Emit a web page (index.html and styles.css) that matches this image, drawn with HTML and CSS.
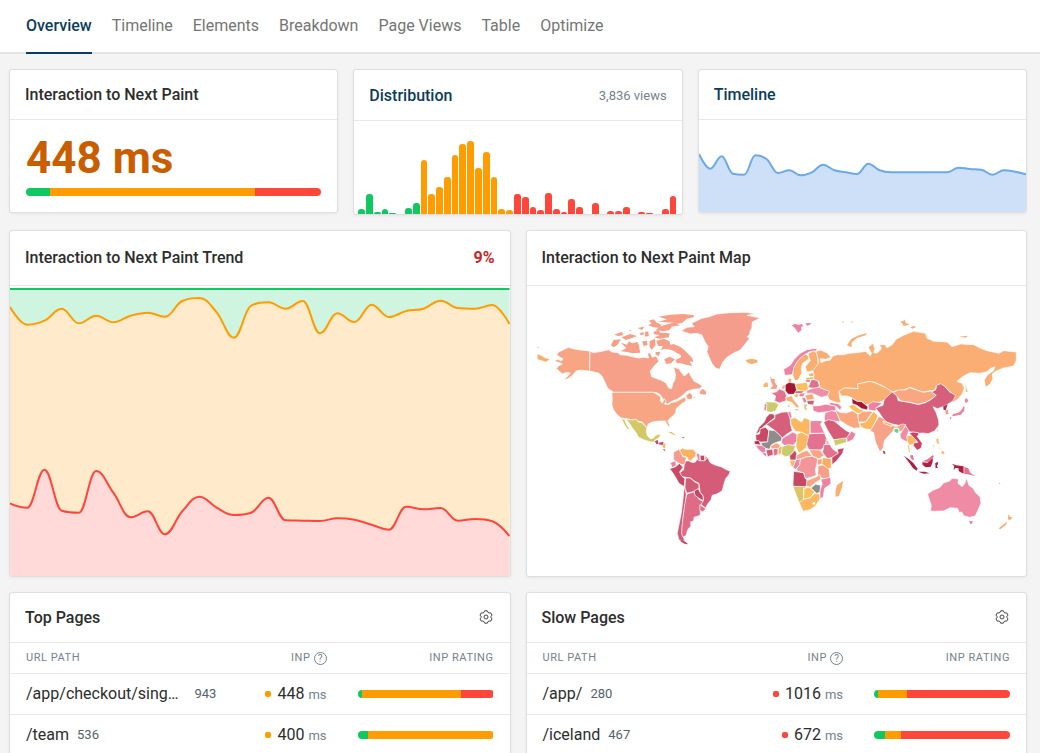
FILE: index.html
```html
<!DOCTYPE html>
<html lang="en">
<head>
    <meta charset="UTF-8">
    <meta name="viewport" content="width=device-width, initial-scale=1.0">
    <title>Interaction to Next Paint</title>
    <link rel="stylesheet" href="styles.css">
</head>

<body>

    <nav class="tabs">
        <a class="tab active" href="#overview">Overview</a>
        <a class="tab" href="#timeline">Timeline</a>
        <a class="tab" href="#elements">Elements</a>
        <a class="tab" href="#breakdown">Breakdown</a>
        <a class="tab" href="#views">Page Views</a>
        <a class="tab" href="#table">Table</a>
        <a class="tab" href="#optimize">Optimize</a>
    </nav>

    <main>
        <div class="row thirds">
            <section class="card">
                <div class="card-header"><h2>Interaction to Next Paint</h2></div>
                <div class="metric">
                    <div class="metric-value">448 ms</div>
                    <div class="rating">
                        <span class="good" style="width: 8%"></span>
                        <span class="medium" style="width: 69.5%"></span>
                        <span class="poor" style="width: 22.5%"></span>
                    </div>
                </div>
            </section>

            <section class="card">
                <div class="card-header tall">
                    <h2><a href="#distribution">Distribution</a></h2>
                    <span class="views">3,836 views</span>
                </div>
                <div class="histogram" id="histogram"></div>
            </section>

            <section class="card">
                <div class="card-header"><h2><a href="#timeline">Timeline</a></h2></div>
                <svg class="timeline-chart" id="timelineChart" viewBox="0 0 328 92" preserveAspectRatio="none"></svg>
            </section>
        </div>

        <div class="row halves">
            <section class="card">
                <div class="card-header large">
                    <h2>Interaction to Next Paint Trend</h2>
                    <span class="change">9%</span>
                </div>
                <svg class="big-chart" id="trendChart" viewBox="0 0 500 290" preserveAspectRatio="none"></svg>
            </section>

            <section class="card">
                <div class="card-header large"><h2>Interaction to Next Paint Map</h2></div>
                <svg class="big-chart map" viewBox="0 0 499 290">
                    <!-- North America -->
                    <g transform="translate(3 14) scale(.3333)">
                        <path fill="#f59d8d" d="M453 93L470 82 492 80 484 70 500 62 515 55 538 50 560 42 600 38 650 37 675 42 650 46 690 54 666 66 665 84 660 92 658 104 650 110 658 115 648 128 630 150 612 158 590 172 578 186 568 208 556 204 545 190 538 175 530 155 534 140 524 125 515 105 500 100 480 102Z"/>
                        <path fill="#f6a08a" d="M179 154L190 158 215 154 235 149 245 156 262 158 270 164 290 166 310 171 325 174 340 172 355 174 352 160 360 158 366 172 378 168 386 184 374 195 366 206 360 214 364 230 380 236 396 242 408 250 415 264 424 266 428 250 434 240 436 222 432 210 430 202 446 206 452 216 462 228 470 222 476 216 484 232 492 244 504 250 516 258 508 266 490 268 470 274 462 282 452 290 440 298 420 306 412 312 405 308 398 296 390 284 380 278 370 277 250 277 240 270 232 264 222 242 215 228 205 219 195 217 182 214 178 213Z"/>
                        <path fill="#f8a583" d="M245 277L368 277 382 284 392 292 390 302 396 310 402 296 408 304 402 312 414 314 424 308 440 304 454 296 466 290 467 304 456 310 446 318 438 326 436 338 430 346 418 356 413 362 418 376 418 384 411 374 406 363 392 363 378 364 366 366 354 372 350 383 342 374 336 366 324 364 318 358 305 360 290 356 274 354 262 346 250 330 245 314 246 296Z"/>
                        <path fill="#f8a583" d="M178 153L150 150 132 147 115 142 98 150 82 158 80 166 90 172 98 176 94 182 80 178 74 184 88 188 96 192 84 198 78 206 86 212 96 222 110 217 120 219 112 229 101 241 116 235 128 225 138 213 146 211 160 211 178 214Z"/>
                        <path fill="#d3c866" d="M288 357L305 360 318 358 324 366 336 368 342 376 350 384 348 396 352 408 360 416 370 414 376 406 392 401 387 413 376 419 370 427 358 425 340 419 324 411 318 399 306 383 298 371Z"/>
                        <g class="islands">
                            <path fill="#d3c866" d="M275 356L283 360 286 370 292 380 298 388 292 386 284 376Z"/>
                            <path fill="#faae70" d="M22 162L34 168 44 174 58 178 46 186 38 182 30 180 22 178ZM22 142l4 0 0 2-4 0z"/>
                            <path fill="#f6a08a" d="M385 50L420 44 460 42 492 46 490 52 470 56 456 68 440 72 450 76 425 80 418 90 400 94 376 90 388 82 400 76 430 68 396 66 384 66 410 58ZM356 62L370 58 380 68 394 74 388 84 370 82 354 76 364 70ZM370 96L384 90 390 98 418 100 416 112 388 116 372 112 388 106 370 102ZM272 128L290 134 296 124 306 130 322 126 326 136 330 158 308 160 290 156 272 154 288 144ZM242 136L250 120 272 118 262 134 250 142ZM252 104L275 95 279 106 264 108ZM274 112L300 102 320 108 300 116 286 120ZM296 92l6-2 0 4zM322 84L342 80 336 90ZM328 100l12-4 0 8-8 2zM344 96l10-2 2 14-12 2zM336 124L350 122 352 136 340 138ZM358 124L374 116 376 136 364 150 358 140ZM378 122L400 116 418 124 420 134 430 132 452 142 462 150 474 162 486 174 489 186 478 184 486 198 468 194 452 190 440 190 436 180 452 172 452 166 436 156 424 150 404 146 392 150 398 138 384 138ZM402 178l16-8 16 8-12 12-14 2zM376 156l14 0-4 12-10-4zM434 150l10 4-6 6zM508 276L518 266 528 276 526 284 510 282ZM468 288l10-10 8 8-2 12-12-2zM488 292l6-2 0 3z"/>
                            <path fill="#fbb760" d="M414 396L424 396 438 406 430 404ZM396 434L406 430 404 446 398 442Z"/>
                            <path fill="#c84566" d="M454 411l10 1-4 3zM374 424L382 419 385 432 378 432ZM386 428L400 425 398 434 388 434ZM398 446l8 4-4 3z"/>
                        </g>
                    </g>

                    <!-- South America -->
                    <g transform="translate(123 134) scale(.3333)">
                        <path fill="#d45c78" d="M102 134L104 124 114 122 128 128 136 126 140 116 148 122 162 122 172 112 180 128 196 136 212 140 226 148 240 154 236 164 226 176 220 196 216 212 200 222 186 226 182 240 172 252 166 264 150 252 160 240 158 226 150 218 148 204 146 190 134 184 120 174 106 172 90 168 88 158 100 150Z"/>
                        <path fill="#c84966" d="M58 146L76 140 88 130 98 142 88 156 94 168 104 176 102 200 86 190 76 172 66 156Z"/>
                        <path fill="#ee82a2" d="M60 128L76 122 78 136 66 143ZM138 98L148 102 150 122 142 120ZM164 108l8 4-8 10z"/>
                        <path fill="#f69c8e" d="M70 96L86 88 92 96 98 110 108 112 104 132 94 134 76 124 70 118Z"/>
                        <path fill="#fab160" d="M88 92L96 84 104 88 128 88 138 98 134 110 120 124 114 120 112 112 98 108Z"/>
                        <path fill="#c84966" d="M149 106L163 106 163 122 151 122Z"/>
                        <path fill="#d25b78" d="M106 174L120 174 134 186 146 192 146 206 132 214 110 220 104 204Z"/>
                        <path fill="#d25b78" d="M102 198L108 222 106 250 100 280 97 310 95 340 104 364 86 360 81 340 87 310 93 280 98 240Z"/>
                        <path fill="#df6c87" d="M110 222L130 216 146 238 158 244 150 258 150 274 150 286 131 292 131 302 121 306 122 318 112 330 108 346 98 352 94 340 96 310 100 280 104 250Z"/>
                        <path fill="#c84566" d="M132 212L144 206 150 218 158 228 160 242 148 236 134 226Z"/>
                        <path fill="#df6c87" d="M149 254L167 266 158 275 149 272Z"/>
                        <path class="islands" fill="#c84566" d="M96 360L106 366 114 373 104 372 88 362Z"/>
                    </g>

                    <!-- Europe, Middle East and Africa -->
                    <g transform="translate(213 24) scale(.3333)">
                        <path fill="#ee82a2" d="M130 178L150 166 162 148 180 130 200 119 228 115 230 122 206 126 184 142 170 158 162 174 156 194 134 196Z"/>
                        <path fill="#faae70" d="M158 196L160 174 170 156 184 140 196 132 206 140 204 148 187 160 183 176 185 188 174 210 164 212Z"/>
                        <path fill="#faae70" d="M204 130L220 123 230 130 234 160 222 182 200 186 195 170 210 152 206 140Z"/>
                        <path fill="#e27290" d="M92 248L108 246 118 237 134 244 139 258 137 272 118 279 103 273 106 258Z"/>
                        <path fill="#cbca6c" d="M76 275L106 277 115 284 106 303 92 307 80 305Z"/>
                        <path fill="#ee82a2" d="M73 281l7 0-2 22-7-2z"/>
                        <path fill="#fbbf5c" d="M166 221L200 217 205 238 192 245 170 240Z"/>
                        <path fill="#d25b78" d="M160 242L192 243 184 251 164 250Z"/>
                        <path fill="#a31636" d="M135 224L146 217 164 220 169 240 161 253 144 253 135 242Z"/>
                        <path fill="#fbae70" d="M136 262L156 257 159 268 171 282 178 291 170 294 154 277 140 273Z"/>
                        <path fill="#cbca6c" d="M160 254l16-4-4 13-8-1z"/>
                        <path fill="#ee82a2" d="M178 250l18-1-8 12-12-2zM184 264l10-2 6 12-8 6z"/>
                        <path fill="#faa870" d="M194 256L216 251 223 267 200 271Z"/>
                        <path fill="#d25b78" d="M200 272L223 271 219 285 202 283Z"/>
                        <path fill="#cbca6c" d="M190 282L206 284 197 290 203 301 192 299Z"/>
                        <path fill="#e0718c" d="M204 232L214 208 232 211 238 229 224 236Z"/>
                        <path fill="#ee8fa8" d="M199 242L216 235 238 232 270 243 262 257 244 262 226 254 212 249 200 251Z"/>
                        <path fill="#ee82a2" d="M217 288L236 287 256 283 284 287 288 302 262 305 236 308 219 303Z"/>
                        <path fill="#ee82a2" d="M266 277l28 4 10 10-4 10-12-12-18-4z"/>
                        <path fill="#ef8ba6" d="M255 308L274 302 288 305 300 334 280 334 264 330 254 336 252 322Z"/>
                        <path fill="#d65c78" d="M250 337L264 329 282 333 302 350 318 362 330 368 318 386 296 389 280 389 264 364Z"/>
                        <path fill="#cbca6c" d="M279 390L300 386 318 384 319 397 285 407Z"/>
                        <path fill="#ee82a2" d="M319 384L334 363 347 372 338 389 321 397Z"/>
                        <path fill="#f9a77e" d="M285 300L300 307 318 309 336 302 352 312 356 336 360 353 340 355 320 345 300 332Z"/>
                        <path fill="#fbbf5c" d="M324 288L340 283 356 296 378 304 362 311 350 309 336 300Z"/>
                        <path fill="#f9a77e" d="M353 314L366 305 388 303 398 306 385 322 376 336 355 336Z"/>
                        <path fill="#fbb860" d="M357 340L376 336 388 322 400 304 413 318 405 336 393 359 376 357 364 352Z"/>
                        <path fill="#c84966" d="M46 374L56 352 72 336 78 322 88 311 100 312 105 322 90 333 78 344 70 349 56 367Z"/>
                        <path fill="#d65f7b" d="M78 343L104 326 104 314 124 307 144 305 150 322 150 340 156 362 140 372 126 384 104 362Z"/>
                        <path fill="#ee82a2" d="M142 307l9-3 4 17-5 6z"/>
                        <path fill="#fbb860" d="M151 326L164 323 184 336 192 323 209 330 209 379 184 367 164 363 152 343Z"/>
                        <path fill="#ee82a2" d="M210 332L247 332 241 343 253 370 210 370Z"/>
                        <path fill="#c84966" d="M46 374L58 372 60 356 76 352 86 362 82 396 48 396Z"/>
                        <path fill="#8d8d8d" d="M86 360L104 362 125 382 124 392 106 398 94 404 88 418 66 412 62 398 82 396Z"/>
                        <path fill="#ee82a2" d="M125 386L158 366 171 374 169 394 160 406 132 406 124 398Z"/>
                        <path fill="#fbb860" d="M171 372L184 367 206 378 203 400 197 414 176 430 167 410Z"/>
                        <path fill="#e27290" d="M207 371L253 370 260 388 252 410 240 421 206 420 199 402Z"/>
                        <path fill="#fbae70" d="M257 388l8 8 6 9-13-4z"/>
                        <path fill="#e27290" d="M251 404L268 403 278 418 296 430 280 441 262 446 247 428Z"/>
                        <path fill="#c84966" d="M275 442L294 430 291 418 312 413 307 430 289 453 275 464Z"/>
                        <path fill="#cbca6c" d="M124 410L144 404 166 407 161 424 150 437 136 440 123 433Z"/>
                        <path fill="#f8a583" d="M91 408L108 399 121 404 114 417 93 417Z"/>
                        <path fill="#b5304f" d="M41 394l14-3 7 14-18-2z"/>
                        <path fill="#ee82a2" d="M46 406l18 0 12 8 0 12-8 4-16-14z"/>
                        <path fill="#d25b78" d="M66 430l10-2 4 14zM77 420L97 417 99 435 82 440Z"/>
                        <path fill="#e27290" d="M99 416L113 416 113 433 101 439Z"/>
                        <path fill="#fbb860" d="M114 416l8-8 4 4-4 22-8 0z"/>
                        <path fill="#c84966" d="M148 438L165 420 169 430 167 450 150 451Z"/>
                        <path fill="#f8a583" d="M169 436L186 426 200 421 216 438 196 441 182 447 169 449Z"/>
                        <path fill="#f8a583" d="M207 419L240 420 251 436 236 447 218 439Z"/>
                        <path fill="#fbb860" d="M147 451L165 451 165 467 154 471Z"/>
                        <path fill="#ee82a2" d="M167 450L181 446 177 466 166 478 158 473Z"/>
                        <path fill="#f49699" d="M181 448L196 441 216 439 233 446 229 466 225 480 228 496 212 502 194 506 192 490 174 484 168 477 178 466Z"/>
                        <path fill="#f8a583" d="M231 450L245 445 248 461 233 466Z"/>
                        <path fill="#fbae62" d="M247 443L273 446 273 476 262 476 245 462Z"/>
                        <path fill="#f79f88" d="M234 467L248 465 267 478 269 502 250 507 232 495Z"/>
                        <path fill="#c84966" d="M160 484L190 488 194 504 202 512 198 532 158 529Z"/>
                        <path fill="#f8a583" d="M199 512L228 501 238 493 242 508 222 520 210 532 198 528Z"/>
                        <path fill="#ee82a2" d="M242 508L271 502 272 521 253 535 249 562 239 566 239 540 246 522Z"/>
                        <path fill="#dfc465" d="M158 529L200 530 190 536 190 574 177 578 168 556Z"/>
                        <path fill="#fbbf5c" d="M191 536L208 531 223 546 210 563 190 568Z"/>
                        <path fill="#8d8d8d" d="M212 534L226 523 241 526 239 545 230 551Z"/>
                        <path fill="#fbb860" d="M177 578L190 568 210 564 222 551 237 551 239 567 226 587 210 599 189 604 183 592Z"/>
                        <circle fill="#fff" cx="221" cy="580" r="4"/>
                        <g class="islands">
                            <path fill="#faae70" d="M308 512L306 530 296 558 286 560 286 542 290 526ZM16 150L34 146 52 150 50 158 34 162 22 158ZM320 106L334 86 356 76 380 70 376 76 350 84 334 98 334 112ZM145 206l9 0-3 12-6-2zM303 36l7-2 0 4zM330 36l8-2-2 4zM206 192l13-3 2 8-13 2zM126 229l8-4-1 10-6 3zM144 284l3 0 1 8-3 0zM162 297l12 1-2 4z"/>
                            <path fill="#cbca6c" d="M198 204l20-3 0 6-20 2z"/>
                            <path fill="#ee82a2" d="M154 46L164 42 175 44 186 42 188 48 182 52 184 60 174 68 164 54ZM196 40l18-1-6 6-8 2zM196 210l14 0-2 6-10-1z"/>
                            <path fill="#f79f88" d="M90 196L94 206 104 208 103 216 111 227 109 236 90 238 98 227 92 214Z"/>
                            <path fill="#fbb860" d="M70 222l10-6 4 8-2 7-12 0z"/>
                        </g>
                    </g>

                    <!-- Asia and Oceania -->
                    <g transform="translate(343 24) scale(.3333)">
                        <path fill="#faae74" d="M-162 124L-148 120-128 130-118 142-134 148-150 146-148 158-134 152-120 150-112 138-98 134-80 134-64 130-40 128-14 124 0 138 4 130-6 112 8 100 14 116 10 128 20 130 34 116 28 104 44 104 50 114 66 104 78 88 100 76 130 64 166 70 170 84 190 94 230 96 246 110 270 102 310 104 330 114 350 122 386 130 400 122 438 126 438 152 430 168 400 174 376 184 366 192 368 206 360 222 346 232 342 210 352 194 370 182 374 170 360 176 348 186 330 190 300 188 280 198 260 214 276 220 282 234 276 252 262 268 250 276 246 272 254 256 240 246 222 228 208 222 198 228 194 240 180 242 160 246 140 240 120 232 100 240 80 242 66 246 50 236 34 226 10 216 0 214-38 222-36 236-76 234-94 244-92 262-88 278-100 278-122 270-128 258-122 244-150 234-154 214-172 206-168 196-172 182-156 160-156 150Z"/>
                        <path fill="#faaf72" d="M-94 244L-78 234-36 236-38 222 0 214 18 220 48 234 66 246 60 262 42 268 36 274 0 284-14 284-26 274-40 274-54 264-68 258-86 258Z"/>
                        <path fill="#a31636" d="M-55 265L-40 274-26 275-7 290-9 300-26 296-40 286-54 281Z"/>
                        <path fill="#ee82a2" d="M-7 284L8 275 36 279 21 292 15 303-4 300Z"/>
                        <path fill="#f8a780" d="M68 248L84 240 106 240 118 233 140 241 160 247 182 243 198 257 184 267 166 277 144 283 120 277 92 273 80 259Z"/>
                        <path fill="#d65f7b" d="M16 294L38 286 42 268 66 246 80 258 84 272 120 278 144 284 166 278 184 268 198 256 184 246 196 240 200 226 212 221 224 230 238 246 256 256 249 272 232 283 220 289 202 296 188 290 197 306 205 330 206 346 193 363 174 371 158 369 146 370 130 367 116 365 106 348 86 346 66 342 44 334 30 312Z"/>
                        <path fill="#f7a38a" d="M0 362L16 336 26 319 40 326 48 336 66 346 78 350 96 342 107 344 97 362 88 366 84 354 72 354 70 362 58 374 42 392 39 413 29 426 16 397 10 368Z"/>
                        <path fill="#fbb860" d="M38 333l28 10-2 7-24-10z"/>
                        <path fill="#ee8ba6" d="M89 374L106 347 116 362 111 376 116 396 104 393 92 386Z"/>
                        <path fill="#fbb860" d="M109 378L128 375 140 392 129 403 118 406 112 397Z"/>
                        <path fill="#c84566" d="M117 370l11-4 16 2 2 8-6 2 16 22-3 14-12 7-12-14 2-8 12-2-18-20z"/>
                        <path fill="#ef8ba5" d="M172 552L188 541 208 533 220 519 238 513 246 505 265 507 263 520 276 530 284 520 288 504 297 527 307 533 317 549 330 561 332 580 323 601 315 618 298 622 281 617 274 605 268 609 262 595 240 593 220 603 181 604 183 586Z"/>
                        <g class="islands">
                            <path fill="#5bdc8b" d="M73 357l10-1 2 10-5 3-7-4z"/>
                            <path fill="#b5304f" d="M219 289l13-6-3 10-2 7-7 0zM38 424l4-2 4 8-5 3z"/>
                            <path fill="#f79f88" d="M225 301l8-2 2 13-8 2z"/>
                            <path fill="#ee82a2" d="M284 268l6-3 4 7-6 7-4-3zM280 289l3 1-1 12-10 12-16 3-10 2 2-7 16-4 10-8zM238 320l6 3-3 6zM297 632l11 2-4 8-4 0zM386 518l5 2-4 2z"/>
                            <path fill="#faae74" d="M286 222l3 14 3 10-5-1zM90 36L104 30 106 38 118 44 100 48 96 40ZM120 52l12-5 4 5-10 4zM266 80l28-3-8 6zM414 615l4 0 0 6 9 1-8 9-6-3zM412 634L406 646 390 658 386 655 400 643Z"/>
                            <path fill="#fbb860" d="M198 388l6-3 1 12 3 6-8-4zM206 410l6 8-2 0zM212 424l8 0 3 7-6 2zM200 358l4 2-2 5zM113 406l3 0 3 20-3 0zM190 406l3 0-5 8z"/>
                            <path fill="#e27290" d="M120 436l8 0 3 14-5-1-5-6zM156 454L172 448 188 435 191 440 174 456ZM282 471L294 475 300 488 314 499 300 494 282 491Z"/>
                            <path fill="#b01f40" d="M101 437L116 448 130 460 142 476 139 482 128 474 118 460ZM144 485L164 485 178 490 160 491ZM156 457L172 458 188 444 187 456 182 470 166 472 157 464ZM195 460l8-5 0 8-3 4 3 6-7 2zM245 461L258 466 280 469 280 491 266 484 264 474 256 474 250 480 252 468Z"/>
                        </g>
                    </g>
                </svg>
            </section>
        </div>

        <div class="row halves">
            <section class="card">
                <div class="card-header">
                    <h2>Top Pages</h2>
                    <button class="settings" type="button" aria-label="Settings">
                        <svg viewBox="0 0 14 14">
                            <path d="M5.7.8h2.6l.6 1.5 1.2.7 1.6-.2 1.3 2.3-1 1.2v1.4l1 1.2-1.3 2.3-1.6-.2-1.2.7-.6 1.5H5.7l-.6-1.5-1.2-.7-1.6.2L1 8.9l1-1.2V6.3L1 5.1l1.3-2.3 1.6.2 1.2-.7z"/>
                            <circle cx="7" cy="7" r="2"/>
                        </svg>
                    </button>
                </div>
                <table>
                    <thead>
                        <tr>
                            <th>URL Path</th>
                            <th class="inp">INP<button class="help" type="button">?</button></th>
                            <th class="inp-rating">INP Rating</th>
                        </tr>
                    </thead>
                    <tbody>
                        <tr>
                            <td><div class="page"><a class="shortened" href="#page">/app/checkout/sing…</a><span>943</span></div></td>
                            <td class="inp"><i class="dot medium"></i>448 <small>ms</small></td>
                            <td class="inp-rating">
                                <div class="rating">
                                    <span class="good" style="width: 3%"></span>
                                    <span class="medium" style="width: 73%"></span>
                                    <span class="poor" style="width: 24%"></span>
                                </div>
                            </td>
                        </tr>
                        <tr>
                            <td><div class="page"><a href="#page">/team</a><span>536</span></div></td>
                            <td class="inp"><i class="dot medium"></i>400 <small>ms</small></td>
                            <td class="inp-rating">
                                <div class="rating">
                                    <span class="good" style="width: 7.5%"></span>
                                    <span class="medium" style="width: 92.5%"></span>
                                </div>
                            </td>
                        </tr>
                    </tbody>
                </table>
            </section>

            <section class="card">
                <div class="card-header">
                    <h2>Slow Pages</h2>
                    <button class="settings" type="button" aria-label="Settings">
                        <svg viewBox="0 0 14 14">
                            <path d="M5.7.8h2.6l.6 1.5 1.2.7 1.6-.2 1.3 2.3-1 1.2v1.4l1 1.2-1.3 2.3-1.6-.2-1.2.7-.6 1.5H5.7l-.6-1.5-1.2-.7-1.6.2L1 8.9l1-1.2V6.3L1 5.1l1.3-2.3 1.6.2 1.2-.7z"/>
                            <circle cx="7" cy="7" r="2"/>
                        </svg>
                    </button>
                </div>
                <table>
                    <thead>
                        <tr>
                            <th>URL Path</th>
                            <th class="inp">INP<button class="help" type="button">?</button></th>
                            <th class="inp-rating">INP Rating</th>
                        </tr>
                    </thead>
                    <tbody>
                        <tr>
                            <td><div class="page"><a href="#page">/app/</a><span>280</span></div></td>
                            <td class="inp"><i class="dot poor"></i>1016 <small>ms</small></td>
                            <td class="inp-rating">
                                <div class="rating">
                                    <span class="good" style="width: 3%"></span>
                                    <span class="medium" style="width: 21.5%"></span>
                                    <span class="poor" style="width: 75.5%"></span>
                                </div>
                            </td>
                        </tr>
                        <tr>
                            <td><div class="page"><a href="#page">/iceland</a><span>467</span></div></td>
                            <td class="inp"><i class="dot poor"></i>672 <small>ms</small></td>
                            <td class="inp-rating">
                                <div class="rating">
                                    <span class="good" style="width: 8%"></span>
                                    <span class="medium" style="width: 12%"></span>
                                    <span class="poor" style="width: 80%"></span>
                                </div>
                            </td>
                        </tr>
                    </tbody>
                </table>
            </section>
        </div>
    </main>

    <script src="charts.js"></script>
</body>

</html>
```

FILE: styles.css
```css
* {
    box-sizing: border-box;
}
html, body {
    height: 100%;
}
body {
    margin: 0;
    overflow: hidden;
    background: #f4f4f4;
    color: #2d2d2d;
    font-family: Roboto, "Liberation Sans", sans-serif;
    font-size: 16px;
}
a {
    color: inherit;
    text-decoration: none;
}
button {
    padding: 0;
    border: none;
    background: none;
    font-family: inherit;
    cursor: pointer;
}

/* tabs */
.tabs {
    display: flex;
    gap: 20px;
    padding: 0 26px;
    background: #fff;
    border-bottom: 2px solid #e4e4e4;
}
.tab {
    margin-bottom: -2px;
    border-bottom: 2px solid transparent;
    line-height: 52px;
    color: #757575;
}
.tab.active {
    border-color: #0b3c5d;
    color: #0b3c5d;
    font-weight: 500;
}

/* cards */
main {
    padding: 15px 13px 15px 9px;
}
.row {
    display: grid;
    align-items: start;
    gap: 15px;
    margin-bottom: 15px;
}
.thirds {
    grid-template-columns: repeat(3, minmax(0, 1fr));
}
.halves {
    grid-template-columns: repeat(2, minmax(0, 1fr));
}
.card {
    overflow: hidden;
    background: #fff;
    border: 1px solid #dfdfdf;
    border-radius: 3px;
    box-shadow: 0 1px 3px rgba(0, 0, 0, 0.06);
}
.card-header {
    display: flex;
    align-items: center;
    justify-content: space-between;
    height: 50px;
    padding: 0 15px;
    border-bottom: 1px solid #e8e8e8;
}
.card-header.tall {
    height: 51px;
}
.card-header.large {
    height: 55px;
    padding-bottom: 2px;
}
h2 {
    margin: 0;
    font-size: 16px;
    font-weight: 500;
}
h2 a {
    color: #0b3c5d;
}
.views {
    color: #75828d;
    font-size: 13px;
}
.change {
    color: #c62828;
    font-weight: 700;
}

/* rating colors */
.good {
    background: #10c860;
}
.medium {
    background: #ff9d00;
}
.poor {
    background: #ff463a;
}
.rating {
    display: flex;
    height: 8px;
    border-radius: 4px;
    overflow: hidden;
}

.metric {
    padding: 16px;
}
.metric-value {
    height: 52px;
    color: #c95e00;
    font-size: 44px;
    font-weight: 700;
    line-height: 44px;
}

/* charts */
.histogram {
    display: flex;
    align-items: flex-end;
    gap: 1px;
    height: 93px;
    padding: 0 5px 0 4px;
}
.histogram span {
    flex: 1;
    border-radius: 3px 3px 0 0;
}
.timeline-chart, .big-chart {
    display: block;
    width: 100%;
    height: 92px;
}
.big-chart {
    height: 290px;
}
.line {
    fill: none;
    stroke-width: 2;
    vector-effect: non-scaling-stroke;
}
.map path {
    stroke: #fff;
    stroke-width: 2;
    stroke-linejoin: round;
}
.map .islands path, .map path.islands {
    stroke: none;
}

/* page tables */
.settings svg {
    display: block;
    width: 14px;
    height: 14px;
    margin: 0 2px 2px 0;
    fill: none;
    stroke: #444;
    stroke-linejoin: round;
}
table {
    width: 100%;
    border-collapse: collapse;
    table-layout: fixed;
}
th {
    height: 30px;
    padding: 0 0 0 16px;
    border-bottom: 1px solid #e8e8e8;
    color: #75828d;
    font-size: 11px;
    font-weight: 400;
    letter-spacing: 0.05em;
    text-align: left;
    text-transform: uppercase;
}
td {
    height: 41px;
    padding: 0 0 0 16px;
    border-bottom: 1px solid #e8e8e8;
}
.inp {
    width: 110px;
    padding: 0;
    text-align: right;
    white-space: nowrap;
}
.inp-rating {
    width: 183px;
    padding: 0 16px 0 0;
    text-align: right;
}
.inp-rating .rating {
    width: 136px;
    margin-left: auto;
}
.inp small {
    color: #75828d;
    font-size: 13px;
}
.dot {
    display: inline-block;
    width: 6px;
    height: 6px;
    margin-right: 6px;
    border-radius: 2px;
    vertical-align: 2px;
}
.help {
    width: 13px;
    height: 13px;
    margin-left: 3px;
    border: 1px solid #75828d;
    border-radius: 50%;
    color: #75828d;
    font-size: 10px;
    line-height: 11px;
    text-align: center;
    vertical-align: middle;
}
.page {
    display: flex;
    align-items: center;
    gap: 8px;
    white-space: nowrap;
}
.page .shortened {
    padding-right: 8px;
}
.page span {
    color: #55616c;
    font-size: 13px;
}
```

FILE: charts.js
```js
// number of views per bucket
const buckets = [
    5, 20, 2, 5, 1, 0, 6, 11, 54, 20, 27, 37, 59, 70, 73, 46, 62, 37, 5, 4, 20,
    17, 7, 4, 21, 5, 2, 15, 7, 0, 11, 0, 3, 3, 7, 0, 2, 1, 0, 5, 18
];

const timeline = [
    34, 48.7, 36.3, 53.7, 54.7, 35.3, 39.3, 53, 50.3, 55.3, 52.3, 44.7, 50.3, 52.3, 54,
    43.7, 50.3, 52.3, 52.3, 52.3, 52.3, 52.3, 52.3, 47.7, 49, 49.7, 54.7, 50.3, 51.7, 54.3
];

const medium = [
    21, 38.7, 34.7, 22.7, 37.3, 29.7, 36.3, 29.7, 26.7, 30.7, 15, 12, 26.3, 51.7, 19.7,
    16.3, 22.7, 15, 47.3, 27.3, 36, 18.7, 31, 25, 22.7, 14.7, 22, 22.7, 19, 38
];

const poor = [
    217.3, 221.7, 183.7, 224.7, 226.7, 185, 206.7, 231.3, 225.3, 248.3, 225.3, 210.7, 221.7, 229, 226.7,
    211.7, 234.3, 234.7, 235, 232.3, 233.7, 238.7, 243.7, 220.7, 223.3, 222, 234.7, 233, 235.3, 250
];

// smooth path through all values, without overshooting them
function spline(values, width) {
    const step = width / (values.length - 1);
    const last = values.length - 1;
    const controls = values.map((y, i) => {
        if (i === 0 || i === last) return { left: y, right: y };
        const prev = values[i - 1];
        const next = values[i + 1];
        const slope = (next - prev) / 5;
        let left = y - slope;
        let right = y + slope;
        if (left > Math.max(prev, y)) {
            left = Math.max(prev, y);
            right = 2 * y - left;
        } else if (left < Math.min(prev, y)) {
            left = Math.min(prev, y);
            right = 2 * y - left;
        }
        if (right > Math.max(next, y)) {
            right = Math.max(next, y);
            left = 2 * y - right;
        } else if (right < Math.min(next, y)) {
            right = Math.min(next, y);
            left = 2 * y - right;
        }
        return { left, right };
    });

    let d = 'M0 ' + values[0];
    for (let i = 1; i <= last; i++) {
        const x = i * step;
        const x1 = (i - 1) * step + (i === 1 ? 0 : step * 0.4);
        const x2 = x - (i === last ? 0 : step * 0.4);
        d += ` C${x1} ${controls[i - 1].right} ${x2} ${controls[i].left} ${x} ${values[i]}`;
    }
    return d;
}

function area(values, width, height, fill, stroke) {
    const d = spline(values, width);
    return `<path fill="${fill}" d="${d} V${height} H0 Z"/><path class="line" stroke="${stroke}" d="${d}"/>`;
}

document.getElementById('timelineChart').innerHTML = area(timeline, 328, 92, '#cde0f8', '#6ca9e8');

document.getElementById('trendChart').innerHTML =
    area([3, 3], 500, 290, '#cff4df', '#10c860') +
    area(medium, 500, 290, '#ffeacc', '#ff9d00') +
    area(poor, 500, 290, '#ffdad8', '#ff463a');

const histogram = document.getElementById('histogram');
buckets.forEach((count, i) => {
    const bar = document.createElement('span');
    bar.className = i < 8 ? 'good' : i < 20 ? 'medium' : 'poor';
    bar.style.height = count + 'px';
    histogram.appendChild(bar);
});
```
